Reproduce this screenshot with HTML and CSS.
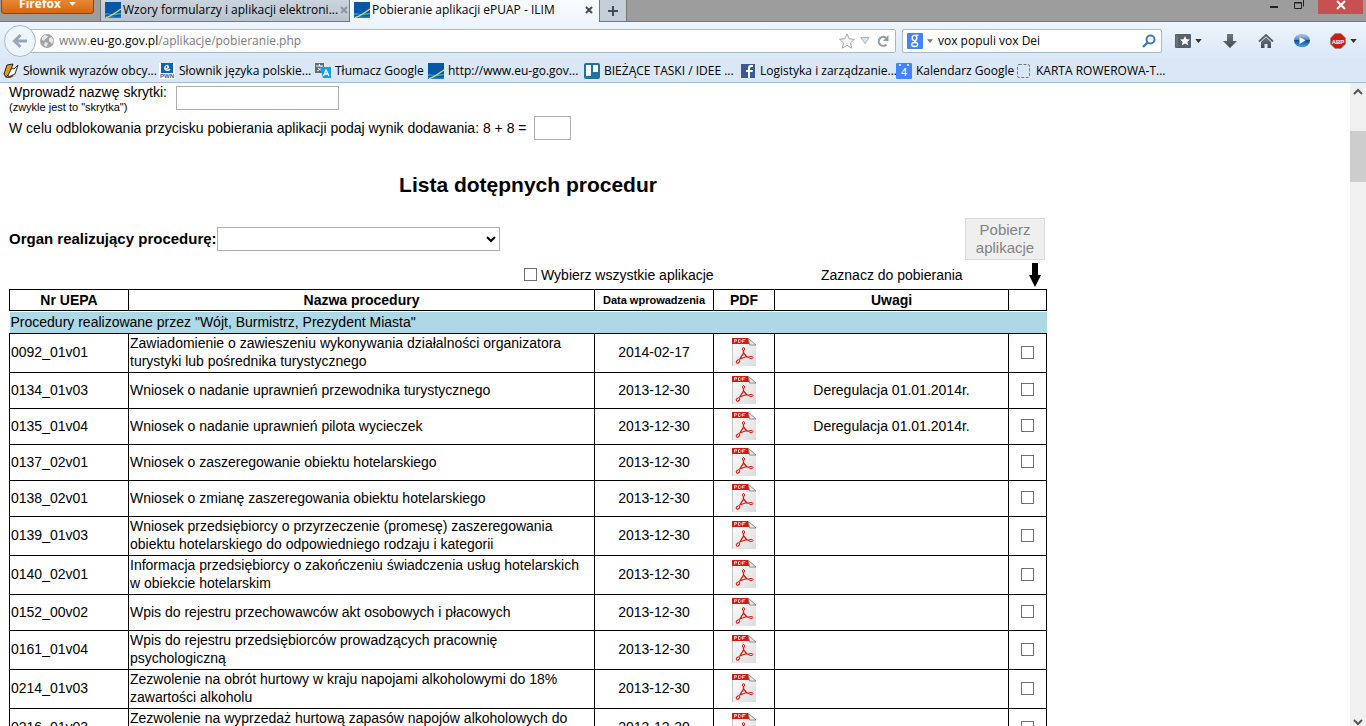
FILE: index.html
```
<!DOCTYPE html>
<html lang="pl">
<head>
<meta charset="utf-8">
<title>Pobieranie aplikacji ePUAP - ILIM</title>
<link rel="stylesheet" href="styles.css">
</head>
<body>
<svg class="defs" aria-hidden="true">
  <defs>
    <linearGradient id="sheet" x1="0" y1="0" x2="1" y2="1"><stop offset="0" stop-color="#fff"/><stop offset="1" stop-color="#dcdcdc"/></linearGradient>
    <linearGradient id="steel" x1="0" y1="0" x2="0" y2="1"><stop offset="0" stop-color="#6d7780"/><stop offset="1" stop-color="#414b55"/></linearGradient>
    <linearGradient id="orb" x1="0" y1="0" x2="0" y2="1"><stop offset="0" stop-color="#b9cfe6"/><stop offset=".45" stop-color="#4f87c4"/><stop offset=".5" stop-color="#0f4f9c"/><stop offset="1" stop-color="#4fa6ea"/></linearGradient>
  </defs>
  <symbol id="ilim" viewBox="0 0 16 16"><path fill="#0757a8" d="M0 0h16v16H0z"/><path fill="#35a3e3" d="M0 11.500c3-1 5 .5 7.500.5S13 10.500 16 11v1.500c-3-.5-6 1-8.500.8S3 12 0 13z"/><path fill="#1d7ec9" d="M0 14c4-1 8 1.500 16 0v2H0z"/><path fill="none" stroke="#e6e04a" stroke-width="1.200" d="M1 15.500C5 15 9 12 16 7"/></symbol>
  <symbol id="pdf" viewBox="0 0 26 30"><path fill="url(#sheet)" d="M1 1h17l7 7v21H1z"/><path fill="none" stroke="#c4c4c4" d="M1.500 6v23"/><path fill="#d8180c" d="M1 1h16l3 6H1z"/><path fill="none" stroke="#f6c6c2" stroke-width="1" d="M3.500 5.500v-3h2v1.500h-2M7.500 2.500v3h1.500l1-1v-1l-1-1zM11.500 5.500v-3h3M11.500 4h2"/><path fill="#eee" stroke="#8b8b8b" d="M17.500 1.500l1 6.500h6.500z"/><path fill="none" stroke="#e0140c" stroke-width="1.300" d="M12.500 11.500v4.500l-4 6.500M12.500 16l3.500 4 4.500.5M8.500 22l7.500-2.500"/><ellipse cx="12.500" cy="12" rx="1" ry="1.500" fill="#fff" stroke="#e0140c"/><ellipse cx="7" cy="24.500" rx="2" ry="1.300" fill="#fff" stroke="#e0140c" transform="rotate(-40 7 24.500)"/><ellipse cx="20" cy="20.500" rx="2" ry="1" fill="#fff" stroke="#e0140c"/></symbol>
  <symbol id="caret" viewBox="0 0 8 5"><path d="M0 0h8L4 5z"/></symbol>
</svg>

<header class="browser">
  <div class="tabstrip">
    <button class="menu-btn" type="button">Firefox <svg class="caret white"><use href="#caret"/></svg></button>
    <div class="tab">
      <svg class="i16"><use href="#ilim"/></svg><span class="tab-name">Wzory formularzy i aplikacji elektroni...</span>
      <button class="plain" type="button" aria-label="Zamknij kartę"><svg class="i8"><path fill="none" stroke="#8d969f" stroke-width="2" d="M1 1l6 6M7 1L1 7"/></svg></button>
    </div>
    <div class="tab active">
      <svg class="i16"><use href="#ilim"/></svg><span class="tab-name">Pobieranie aplikacji ePUAP - ILIM</span>
      <button class="plain" type="button" aria-label="Zamknij kartę"><svg class="i8"><path fill="none" stroke="#444b53" stroke-width="2" d="M1 1l6 6M7 1L1 7"/></svg></button>
    </div>
    <button class="new-tab" type="button" aria-label="Nowa karta"><svg class="i12"><path fill="none" stroke="#444c55" stroke-width="2" d="M6 1v10M1 6h10"/></svg></button>
    <div class="window-btns">
      <button class="plain" type="button" aria-label="Minimalizuj"><svg class="i12"><path fill="#222" d="M2 6h8v2H2z"/></svg></button>
      <button class="plain" type="button" aria-label="Przywróć"><svg class="i12"><path fill="none" stroke="#222" d="M1.500 2.500h7v6h-7zM1.500 3h7M10.500 6.500v-7"/></svg></button>
      <button class="close" type="button" aria-label="Zamknij"><svg class="i8"><path fill="none" stroke="#fff" stroke-width="2" d="M0 0l8 8M8 0L0 8"/></svg></button>
    </div>
  </div>

  <div class="navbar">
    <button class="back" type="button" aria-label="Wstecz"><svg class="i16"><path fill="none" stroke="#98a7b8" stroke-width="3" d="M15 8H3M8.500 2L2.500 8l6 6"/></svg></button>
    <div class="urlbar">
      <svg class="i14"><circle cx="7" cy="7" r="7" fill="#a3a3a3"/><path fill="#e6e6e6" d="M2 3l3-2 3 1-1 2-2 1-1 2-2-1zM5 8l3 1-1 3-1 1-2-2zM9 4l3-1 1.500 4-1.500 3-1.500-2H9z"/></svg>
      <span class="url">www.<b>eu-go.gov.pl</b>/aplikacje/pobieranie.php</span>
      <svg class="i16" viewBox="0 0 16 16"><path fill="#f7f7f7" stroke="#a6a6a6" d="M8 .8l2.200 5 5.300.5-4 3.600 1.200 5.300L8 12.400l-4.700 2.800 1.200-5.300-4-3.600 5.300-.5z"/></svg>
      <svg class="drop"><path fill="#dfe5ea" stroke="#a9b4be" d="M.8.500h8.400L5 6.500z"/></svg>
      <svg class="i12"><path fill="none" stroke="#8e9aa6" stroke-width="2" d="M9.500 9.500A4.500 4.500 0 1 1 9 2.800"/><path fill="#8e9aa6" d="M11.500 0v6H6z"/></svg>
    </div>
    <div class="searchbar">
      <svg class="i16"><rect width="16" height="16" rx="1" fill="#4285f4"/><ellipse cx="7.500" cy="5" rx="2.300" ry="2.600" fill="none" stroke="#fff" stroke-width="1.400"/><path fill="none" stroke="#fff" stroke-width="1.200" d="M7.500 2.400h4M8 7.500c-1 1 .5 1.500 1.500 2"/><ellipse cx="7.700" cy="11.500" rx="3" ry="2" fill="none" stroke="#fff" stroke-width="1.300"/></svg>
      <svg class="caret small"><use href="#caret"/></svg>
      <input class="search" type="text" aria-label="Szukaj" value="vox populi vox Dei">
      <svg class="i14"><circle cx="8.500" cy="5.500" r="4" fill="none" stroke="#3f79b5" stroke-width="2"/><path stroke="#3f79b5" stroke-width="2.400" d="M5.500 8.500L1 13"/></svg>
    </div>
    <div class="tools">
      <button class="plain pair" type="button" aria-label="Zakładki"><svg class="i16"><rect y="1" width="16" height="14" rx="1" fill="#56606a"/><path fill="#7b858f" d="M1.500 2.500h1v11h-1z"/><path fill="#fff" d="M10 3l1.500 3.200 3.500.3-2.600 2.300.8 3.500L10 10.500l-3.200 1.800.8-3.500L5 6.500l3.500-.3z"/></svg><svg class="caret dark"><use href="#caret"/></svg></button>
      <button class="plain" type="button" aria-label="Pobieranie"><svg class="i16"><path fill="url(#steel)" d="M5 1h6v7h4l-7 7-7-7h4z"/></svg></button>
      <button class="plain" type="button" aria-label="Strona domowa"><svg class="i16"><path fill="none" stroke="#56606a" stroke-width="1.800" d="M1 8.500L8 2l7 6.500"/><path fill="url(#steel)" d="M3 9l5-4.700L13 9v6H9.500v-4h-3v4H3z"/></svg></button>
      <button class="plain" type="button" aria-label="Odtwarzaj"><svg class="i16"><ellipse cx="8" cy="7.500" rx="8" ry="6.800" fill="url(#orb)"/><path fill="#fff" d="M5.500 4l6 3.500-6 3.500z"/></svg></button>
      <button class="plain pair" type="button" aria-label="Adblock Plus"><svg class="i16"><path fill="#c7200f" stroke="#8b8b8b" stroke-width=".6" d="M5 .5h6L15.500 5v6L11 15.500H5L.5 11V5z"/><text class="abp" x="8" y="11">ABP</text></svg><svg class="caret dark"><use href="#caret"/></svg></button>
    </div>
  </div>

  <nav class="bookmarks">
    <a class="bm" href="#"><svg class="i16"><path fill="#e49a1c" stroke="#2a2118" d="M4 2l6-1-4 10-3 3-2-3z"/><path fill="#fff" stroke="#333" d="M9 5l2 1 4-4-3 9-6 3-1-2z"/><path fill="none" stroke="#5b3a10" stroke-width="1.500" d="M2 13c2 2 4 2 8-.5"/></svg>Słownik wyrazów obcy...</a>
    <a class="bm" href="#"><svg class="i16"><path fill="#fff" d="M0 0h16v16H0z"/><path fill="#0866b0" d="M2 0h12v10H2z"/><path fill="none" stroke="#fff" stroke-width="1.500" d="M5 5.500c4 .5 5-1 4-2.500S5.500 3 6 5.500s4 2 5 .5"/><text class="pwn" x="8" y="15">PWN</text></svg>Słownik języka polskie...</a>
    <a class="bm mid" href="#"><svg class="i16"><path fill="#5b6b78" d="M0 0h9v10H0z"/><path fill="none" stroke="#fff" d="M1 3h7M4.500 1v2M2 8c3-1 4-3 4.500-5M3 5l4 3"/><path fill="#1a9be8" d="M5 4h11v11H8z"/><path fill="none" stroke="#fff" stroke-width="1.300" d="M8.500 13L11 7l3 6M9.500 11h4"/></svg>Tłumacz Google</a>
    <a class="bm" href="#"><svg class="i16"><use href="#ilim"/></svg>http://www.eu-go.gov...</a>
    <a class="bm" href="#"><svg class="i16"><rect width="16" height="16" rx="2" fill="#23719f"/><path fill="#fff" d="M2 2h5v11H2zM9 2h5v7H9z"/></svg>BIEŻĄCE TASKI / IDEE ...</a>
    <a class="bm" href="#"><svg class="i16"><path fill="#3b5998" d="M1 1h14v14H1z"/><path fill="#fff" d="M8 15V9H6V7h2V5c0-2 1-3 3-3h2v2h-1.500C10.500 4 10 4.500 10 5.500V7h3l-.5 2H10v6z"/></svg>Logistyka i zarządzanie...</a>
    <a class="bm short" href="#"><svg class="i16"><rect width="16" height="16" rx="1" fill="#4285f4"/><path fill="#c6dafc" d="M3 1h2v2H3zM11 1h2v2h-2z"/><text class="cal" x="8" y="13">4</text></svg>Kalendarz Google</a>
    <a class="bm" href="#"><svg class="i16"><rect x="1.500" y="1.500" width="12" height="13" rx="1.500" fill="none" stroke="#777" stroke-dasharray="3 1.500"/></svg>KARTA ROWEROWA-T...</a>
  </nav>
</header>

<div class="viewport">
  <main class="page">
    <div class="field">
      <label for="box">Wprowadź nazwę skrytki:<small>(zwykle jest to "skrytka")</small></label>
      <input class="box-name" id="box" type="text">
    </div>
    <div class="field">
      <label for="sum">W celu odblokowania przycisku pobierania aplikacji podaj wynik dodawania: 8 + 8 =</label>
      <input class="sum" id="sum" type="text">
    </div>

    <h1>Lista dotępnych procedur</h1>

    <div class="filter">
      <label for="organ">Organ realizujący procedurę:</label>
      <select id="organ"><option></option></select>
      <button class="download" type="button" disabled>Pobierz aplikacje</button>
    </div>
    <div class="pick">
      <label class="all"><input type="checkbox">Wybierz wszystkie aplikacje</label>
      <span class="hint">Zaznacz do pobierania</span>
      <svg class="arrow"><path d="M3 0h6v12h3L6 24 0 12h3z"/></svg>
    </div>

    <table>
      <colgroup><col class="c-nr"><col><col class="c-date"><col class="c-pdf"><col class="c-note"><col class="c-check"></colgroup>
      <thead>
        <tr><th>Nr UEPA</th><th>Nazwa procedury</th><th class="tiny">Data wprowadzenia</th><th>PDF</th><th>Uwagi</th><th></th></tr>
      </thead>
      <tbody>
        <tr class="group"><td colspan="6"><div>Procedury realizowane przez "Wójt, Burmistrz, Prezydent Miasta"</div></td></tr>
        <tr><td>0092_01v01</td><td>Zawiadomienie o zawieszeniu wykonywania działalności organizatora<br>turystyki lub pośrednika turystycznego</td><td>2014-02-17</td><td><svg class="pdf"><use href="#pdf"/></svg></td><td></td><td><input type="checkbox" aria-label="0092_01v01"></td></tr>
        <tr><td>0134_01v03</td><td>Wniosek o nadanie uprawnień przewodnika turystycznego</td><td>2013-12-30</td><td><svg class="pdf"><use href="#pdf"/></svg></td><td>Deregulacja 01.01.2014r.</td><td><input type="checkbox" aria-label="0134_01v03"></td></tr>
        <tr><td>0135_01v04</td><td>Wniosek o nadanie uprawnień pilota wycieczek</td><td>2013-12-30</td><td><svg class="pdf"><use href="#pdf"/></svg></td><td>Deregulacja 01.01.2014r.</td><td><input type="checkbox" aria-label="0135_01v04"></td></tr>
        <tr><td>0137_02v01</td><td>Wniosek o zaszeregowanie obiektu hotelarskiego</td><td>2013-12-30</td><td><svg class="pdf"><use href="#pdf"/></svg></td><td></td><td><input type="checkbox" aria-label="0137_02v01"></td></tr>
        <tr><td>0138_02v01</td><td>Wniosek o zmianę zaszeregowania obiektu hotelarskiego</td><td>2013-12-30</td><td><svg class="pdf"><use href="#pdf"/></svg></td><td></td><td><input type="checkbox" aria-label="0138_02v01"></td></tr>
        <tr><td>0139_01v03</td><td>Wniosek przedsiębiorcy o przyrzeczenie (promesę) zaszeregowania<br>obiektu hotelarskiego do odpowiedniego rodzaju i kategorii</td><td>2013-12-30</td><td><svg class="pdf"><use href="#pdf"/></svg></td><td></td><td><input type="checkbox" aria-label="0139_01v03"></td></tr>
        <tr><td>0140_02v01</td><td>Informacja przedsiębiorcy o zakończeniu świadczenia usług hotelarskich<br>w obiekcie hotelarskim</td><td>2013-12-30</td><td><svg class="pdf"><use href="#pdf"/></svg></td><td></td><td><input type="checkbox" aria-label="0140_02v01"></td></tr>
        <tr><td>0152_00v02</td><td>Wpis do rejestru przechowawców akt osobowych i płacowych</td><td>2013-12-30</td><td><svg class="pdf"><use href="#pdf"/></svg></td><td></td><td><input type="checkbox" aria-label="0152_00v02"></td></tr>
        <tr><td>0161_01v04</td><td>Wpis do rejestru przedsiębiorców prowadzących pracownię<br>psychologiczną</td><td>2013-12-30</td><td><svg class="pdf"><use href="#pdf"/></svg></td><td></td><td><input type="checkbox" aria-label="0161_01v04"></td></tr>
        <tr><td>0214_01v03</td><td>Zezwolenie na obrót hurtowy w kraju napojami alkoholowymi do 18%<br>zawartości alkoholu</td><td>2013-12-30</td><td><svg class="pdf"><use href="#pdf"/></svg></td><td></td><td><input type="checkbox" aria-label="0214_01v03"></td></tr>
        <tr><td>0216_01v03</td><td>Zezwolenie na wyprzedaż hurtową zapasów napojów alkoholowych do<br>18% zawartości alkoholu</td><td>2013-12-30</td><td><svg class="pdf"><use href="#pdf"/></svg></td><td></td><td><input type="checkbox" aria-label="0216_01v03"></td></tr>
      </tbody>
    </table>
  </main>
  <div class="scrollbar">
    <svg class="i8"><path fill="none" stroke="#555" stroke-width="2" d="M0 6l4-4 4 4"/></svg>
    <div class="thumb"></div>
    <svg class="i8 down"><path fill="none" stroke="#555" stroke-width="2" d="M0 2l4 4 4-4"/></svg>
  </div>
</div>
</body>
</html>
```
FILE: styles.css
```
* { box-sizing: border-box; }
body {
  margin: 0;
  height: 100vh;
  display: flex;
  flex-direction: column;
  overflow: hidden;
  background: #fff;
  color: #000;
  font: 14px/18px "Liberation Sans", Arial, sans-serif;
}
svg { display: block; flex: none; overflow: visible; }
.defs { position: absolute; width: 0; height: 0; }
.i8 { width: 8px; height: 8px; }
.i12 { width: 12px; height: 12px; }
.i14 { width: 14px; height: 14px; }
.i16 { width: 16px; height: 16px; }
.plain { border: 0; padding: 0; background: none; }
.caret { width: 7px; height: 4px; }
.small { width: 6px; fill: #777; }
.white { fill: #fff; }
.dark { fill: #333; }

/* browser chrome */
.browser {
  flex: none;
  border-bottom: 1px solid #a3bbdb;
  background: linear-gradient(#eef5fd 22px, #d9e7f7 60px);
  font: 12px/16px "Open Sans", "Noto Sans", sans-serif;
}
.tabstrip {
  display: flex;
  height: 22px;
  border-bottom: 1px solid #777;
  background: #9d9d9d;
}
.menu-btn {
  display: flex;
  align-items: center;
  justify-content: center;
  gap: 8px;
  width: 93px;
  height: 22px;
  margin: -8px 6px 0 1px;
  padding: 2px 0 0;
  border: 1px solid #8c4410;
  border-radius: 3px;
  background: linear-gradient(#ee9a48, #d9660f);
  color: #fff;
  font: bold 12px/16px "Open Sans", sans-serif;
}
.tab {
  display: flex;
  align-items: center;
  gap: 2px;
  width: 249px;
  height: 21px;
  padding: 0 6px 1px 4px;
  border-left: 1px solid #777;
  background: linear-gradient(#c9d4df, #b9c4cf);
}
.tab.active {
  width: 250px;
  height: 22px;
  padding-bottom: 2px;
  background: linear-gradient(#fbfdff, #eef5fd);
}
.tab-name { flex: 1; white-space: nowrap; }
.new-tab {
  display: flex;
  align-items: center;
  justify-content: center;
  width: 28px;
  height: 21px;
  padding: 0;
  border: solid #777;
  border-width: 0 1px;
  background: #c3ced9;
}
.window-btns {
  display: flex;
  gap: 13px;
  height: 14px;
  margin-left: auto;
  padding-right: 3px;
}
.window-btns .plain { height: 11px; }
.close {
  display: flex;
  align-items: center;
  justify-content: center;
  width: 45px;
  height: 14px;
  padding: 0 0 4px;
  border: 0;
  background: #c75050;
}
.navbar {
  display: flex;
  align-items: center;
  height: 37px;
  padding: 0 9px 0 4px;
}
.back {
  position: relative;
  z-index: 1;
  display: flex;
  align-items: center;
  justify-content: center;
  width: 32px;
  height: 32px;
  margin-right: -8px;
  padding: 0;
  border: 1px solid #a9b9cc;
  border-radius: 50%;
  background: #eff5fc;
}
.urlbar, .searchbar {
  display: flex;
  align-items: center;
  height: 24px;
  border: 1px solid #a9b8ca;
  border-radius: 2px;
  background: #fff;
}
.urlbar { flex: 1; gap: 5px; padding: 0 6px 0 11px; }
.url { flex: 1; color: #7b7b7b; }
.url b { color: #000; font-weight: normal; }
.drop { width: 10px; height: 7px; margin-right: 2px; }
.searchbar { width: 260px; gap: 4px; margin: 0 13px 0 6px; padding: 0 5px 0 4px; }
.search {
  flex: 1;
  min-width: 0;
  padding: 0 0 0 1px;
  border: 0;
  outline: 0;
  background: none;
  font: inherit;
}
.tools { display: flex; align-items: center; gap: 20px; }
.pair { display: flex; align-items: center; gap: 4px; }
.abp { fill: #fff; font: bold 6px "Liberation Sans", sans-serif; text-anchor: middle; }
.pwn { fill: #0866b0; font: bold 6px "Liberation Sans", sans-serif; text-anchor: middle; }
.cal { fill: #fff; font: 11px "Liberation Sans", sans-serif; text-anchor: middle; }
.bookmarks { display: flex; height: 23px; padding-left: 3px; }
.bm {
  display: flex;
  align-items: center;
  gap: 4px;
  width: 156px;
  color: #000;
  text-decoration: none;
  white-space: nowrap;
}
.mid { width: 113px; }
.short { width: 120px; }

/* page */
.viewport { flex: 1; display: flex; min-height: 0; }
.page {
  flex: 1;
  min-width: 0;
  padding: 0 9px;
  overflow: hidden;
}
.field, .filter, .pick, h1, table { max-width: 1038px; }
input[type="text"].box-name, .sum, select {
  height: 24px;
  border: 1px solid #abadb3;
  border-radius: 0;
  background: #fff;
}
.field { display: flex; align-items: center; gap: 7px; margin-bottom: 3px; }
small { display: block; font-size: 11px; line-height: 12px; }
.box-name { width: 163px; margin-left: 2px; }
.sum { width: 37px; }
h1 { margin: 32px 0 20px; font-size: 21px; line-height: 26px; text-align: center; }
.filter { display: flex; align-items: center; font-size: 15px; font-weight: bold; }
select { width: 283px; }
.download {
  width: 80px;
  height: 42px;
  margin: 0 2px 0 auto;
  padding: 0 8px;
  border: 1px solid #d9d9d9;
  background: #efefef;
  color: #838383;
  font: 15px/18px "Liberation Sans", Arial, sans-serif;
}
.pick {
  display: grid;
  grid-template-columns: 1fr 226px 12px;
  align-items: center;
  height: 29px;
  padding: 0 6px 0 515px;
}
input[type="checkbox"] {
  appearance: none;
  width: 13px;
  height: 13px;
  margin: 0;
  border: 1px solid #707070;
  background: #fff;
}
.all { display: flex; align-items: center; gap: 4px; }
.hint { padding-left: 18px; }
.arrow { width: 12px; height: 24px; }
table { width: 100%; table-layout: fixed; border-collapse: collapse; }
.c-nr, .c-date { width: 119px; }
.c-pdf { width: 61px; }
.c-note { width: 234px; }
.c-check { width: 38px; }
th, td { padding: 1px; border: 1px solid #000; }
th { height: 21px; }
td { height: 36px; padding: 0 1px 2px; text-align: center; }
td:nth-child(-n+2) { text-align: left; }
.tiny { font-size: 11px; }
.group td { height: 23px; padding: 1px 0 0; border-left: 0; border-right: 0; }
.group div { padding: 1px; background: #add8e6; line-height: 19px; }
.pdf { width: 26px; height: 30px; margin: 0 auto; }
td input[type="checkbox"] { display: block; margin: 0 auto; }

.scrollbar {
  display: flex;
  flex-direction: column;
  align-items: center;
  width: 16px;
  padding: 5px 0 0;
  background: #f0f0f0;
}
.thumb { width: 16px; height: 51px; margin-top: 35px; background: #cdcdcd; }
.down { margin-top: auto; }
```
